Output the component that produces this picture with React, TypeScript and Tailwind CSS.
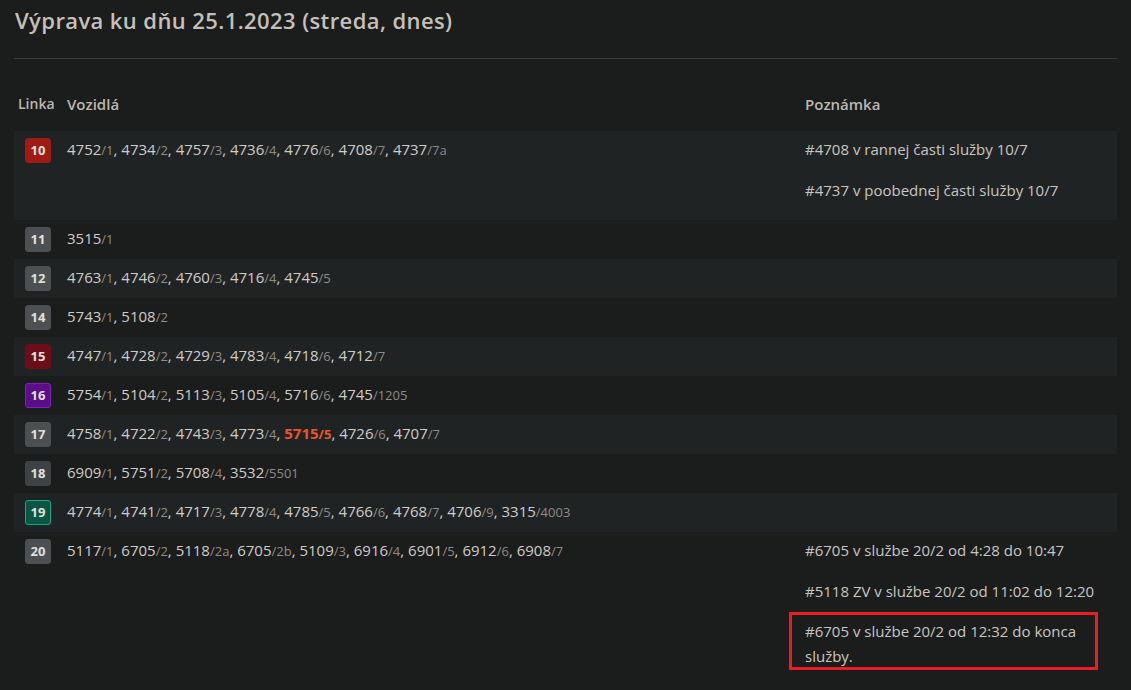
import React from "react";

type Vehicle = [string, string, boolean?];

interface Row {
  line: string;
  badge: string;
  vehicles: Vehicle[];
  notes?: string[];
  striped: boolean;
  marked?: number;
}

const rows: Row[] = [
  {
    line: "10",
    badge: "bg-[#a01b14] border-[#a01b14]",
    vehicles: [["4752", "1"], ["4734", "2"], ["4757", "3"], ["4736", "4"], ["4776", "6"], ["4708", "7"], ["4737", "7a"]],
    notes: ["#4708 v rannej časti služby 10/7", "#4737 v poobednej časti služby 10/7"],
    striped: true,
  },
  { line: "11", badge: "bg-[#4d5053] border-[#4d5053]", vehicles: [["3515", "1"]], striped: false },
  {
    line: "12",
    badge: "bg-[#4d5053] border-[#4d5053]",
    vehicles: [["4763", "1"], ["4746", "2"], ["4760", "3"], ["4716", "4"], ["4745", "5"]],
    striped: true,
  },
  { line: "14", badge: "bg-[#4d5053] border-[#4d5053]", vehicles: [["5743", "1"], ["5108", "2"]], striped: false },
  {
    line: "15",
    badge: "bg-[#6b0e19] border-[#6b0e19]",
    vehicles: [["4747", "1"], ["4728", "2"], ["4729", "3"], ["4783", "4"], ["4718", "6"], ["4712", "7"]],
    striped: true,
  },
  {
    line: "16",
    badge: "bg-[#5a0e8a] border-[#7c22b4]",
    vehicles: [["5754", "1"], ["5104", "2"], ["5113", "3"], ["5105", "4"], ["5716", "6"], ["4745", "1205"]],
    striped: false,
  },
  {
    line: "17",
    badge: "bg-[#4d5053] border-[#4d5053]",
    vehicles: [["4758", "1"], ["4722", "2"], ["4743", "3"], ["4773", "4"], ["5715", "5", true], ["4726", "6"], ["4707", "7"]],
    striped: true,
  },
  {
    line: "18",
    badge: "bg-[#3f4245] border-[#3f4245]",
    vehicles: [["6909", "1"], ["5751", "2"], ["5708", "4"], ["3532", "5501"]],
    striped: false,
  },
  {
    line: "19",
    badge: "bg-[#0a5644] border-[#1ba686]",
    vehicles: [["4774", "1"], ["4741", "2"], ["4717", "3"], ["4778", "4"], ["4785", "5"], ["4766", "6"], ["4768", "7"], ["4706", "9"], ["3315", "4003"]],
    striped: true,
  },
  {
    line: "20",
    badge: "bg-[#4d5053] border-[#4d5053]",
    vehicles: [["5117", "1"], ["6705", "2"], ["5118", "2a"], ["6705", "2b"], ["5109", "3"], ["6916", "4"], ["6901", "5"], ["6912", "6"], ["6908", "7"]],
    notes: [
      "#6705 v službe 20/2 od 4:28 do 10:47",
      "#5118 ZV v službe 20/2 od 11:02 do 12:20",
      "#6705 v službe 20/2 od 12:32 do konca služby.",
    ],
    striped: false,
    marked: 2,
  },
];

function VehicleList({ vehicles }: { vehicles: Vehicle[] }) {
  return (
    <span>
      {vehicles.map(([num, duty, hot], i) => (
        <span key={i}>
          <span className={hot ? "font-bold text-[#e9552f]" : ""}>{num}</span>
          <span className={hot ? "text-[13px] font-bold text-[#e9552f]" : "text-[13px] text-[#8f8b85]"}>/{duty}</span>
          {i < vehicles.length - 1 && ", "}
        </span>
      ))}
    </span>
  );
}

export default function App() {
  return (
    <div
      className="min-h-[690px] bg-[#1b1c1c] px-[14px] pt-[6px] text-[#c9c6c1]"
      style={{ fontFamily: "'Open Sans', Lato, sans-serif" }}
    >
      <h1 className="pl-[1px] text-[22px] font-semibold leading-[28px] tracking-[0.4px] text-[#c4c0ba]">
        Výprava ku dňu 25.1.2023 (streda, dnes)
      </h1>
      <hr className="mt-[24px] border-t border-[#3a3b3b]" />

      <table className="mt-[35px] w-full table-fixed border-collapse text-[15px]">
        <colgroup>
          <col className="w-[53px]" />
          <col className="w-[738px]" />
          <col />
        </colgroup>
        <thead>
          <tr className="text-left font-semibold text-[#bcb8b2]">
            <th className="px-[4px] pb-[17px] align-top text-[14px] font-semibold leading-[20px]">Linka</th>
            <th className="px-0 pb-[17px] align-top text-[15px] font-semibold leading-[20px]">Vozidlá</th>
            <th className="px-0 pb-[17px] align-top text-[15px] font-semibold leading-[20px]">Poznámka</th>
          </tr>
        </thead>
        <tbody>
          {rows.map((row) => (
            <tr key={row.line} className={row.striped ? "bg-[#202324]" : ""}>
              <td className="px-[11px] pt-[7px] pb-[7px] align-top">
                <div
                  className={`flex h-[25px] w-[26px] items-center justify-center rounded-[3px] border text-[13px] font-bold text-[#e2e0dc] ${row.badge}`}
                >
                  {row.line}
                </div>
              </td>
              <td className="pt-[6px] align-top leading-[24px] text-[#cfccc7]">
                <VehicleList vehicles={row.vehicles} />
              </td>
              <td className="pr-[10px] pt-[6px] pb-[2px] align-top">
                {row.notes?.map((note, i) => (
                  <p key={i} className="relative mb-4 leading-[24.5px] text-[#c9c6c1]">
                    {note}
                    {row.marked === i && (
                      <span className="pointer-events-none absolute -bottom-[2px] -left-[16px] -top-[7px] right-[9px] border-[3px] border-[#ec1c24]" />
                    )}
                  </p>
                ))}
              </td>
            </tr>
          ))}
        </tbody>
      </table>
    </div>
  );
}
